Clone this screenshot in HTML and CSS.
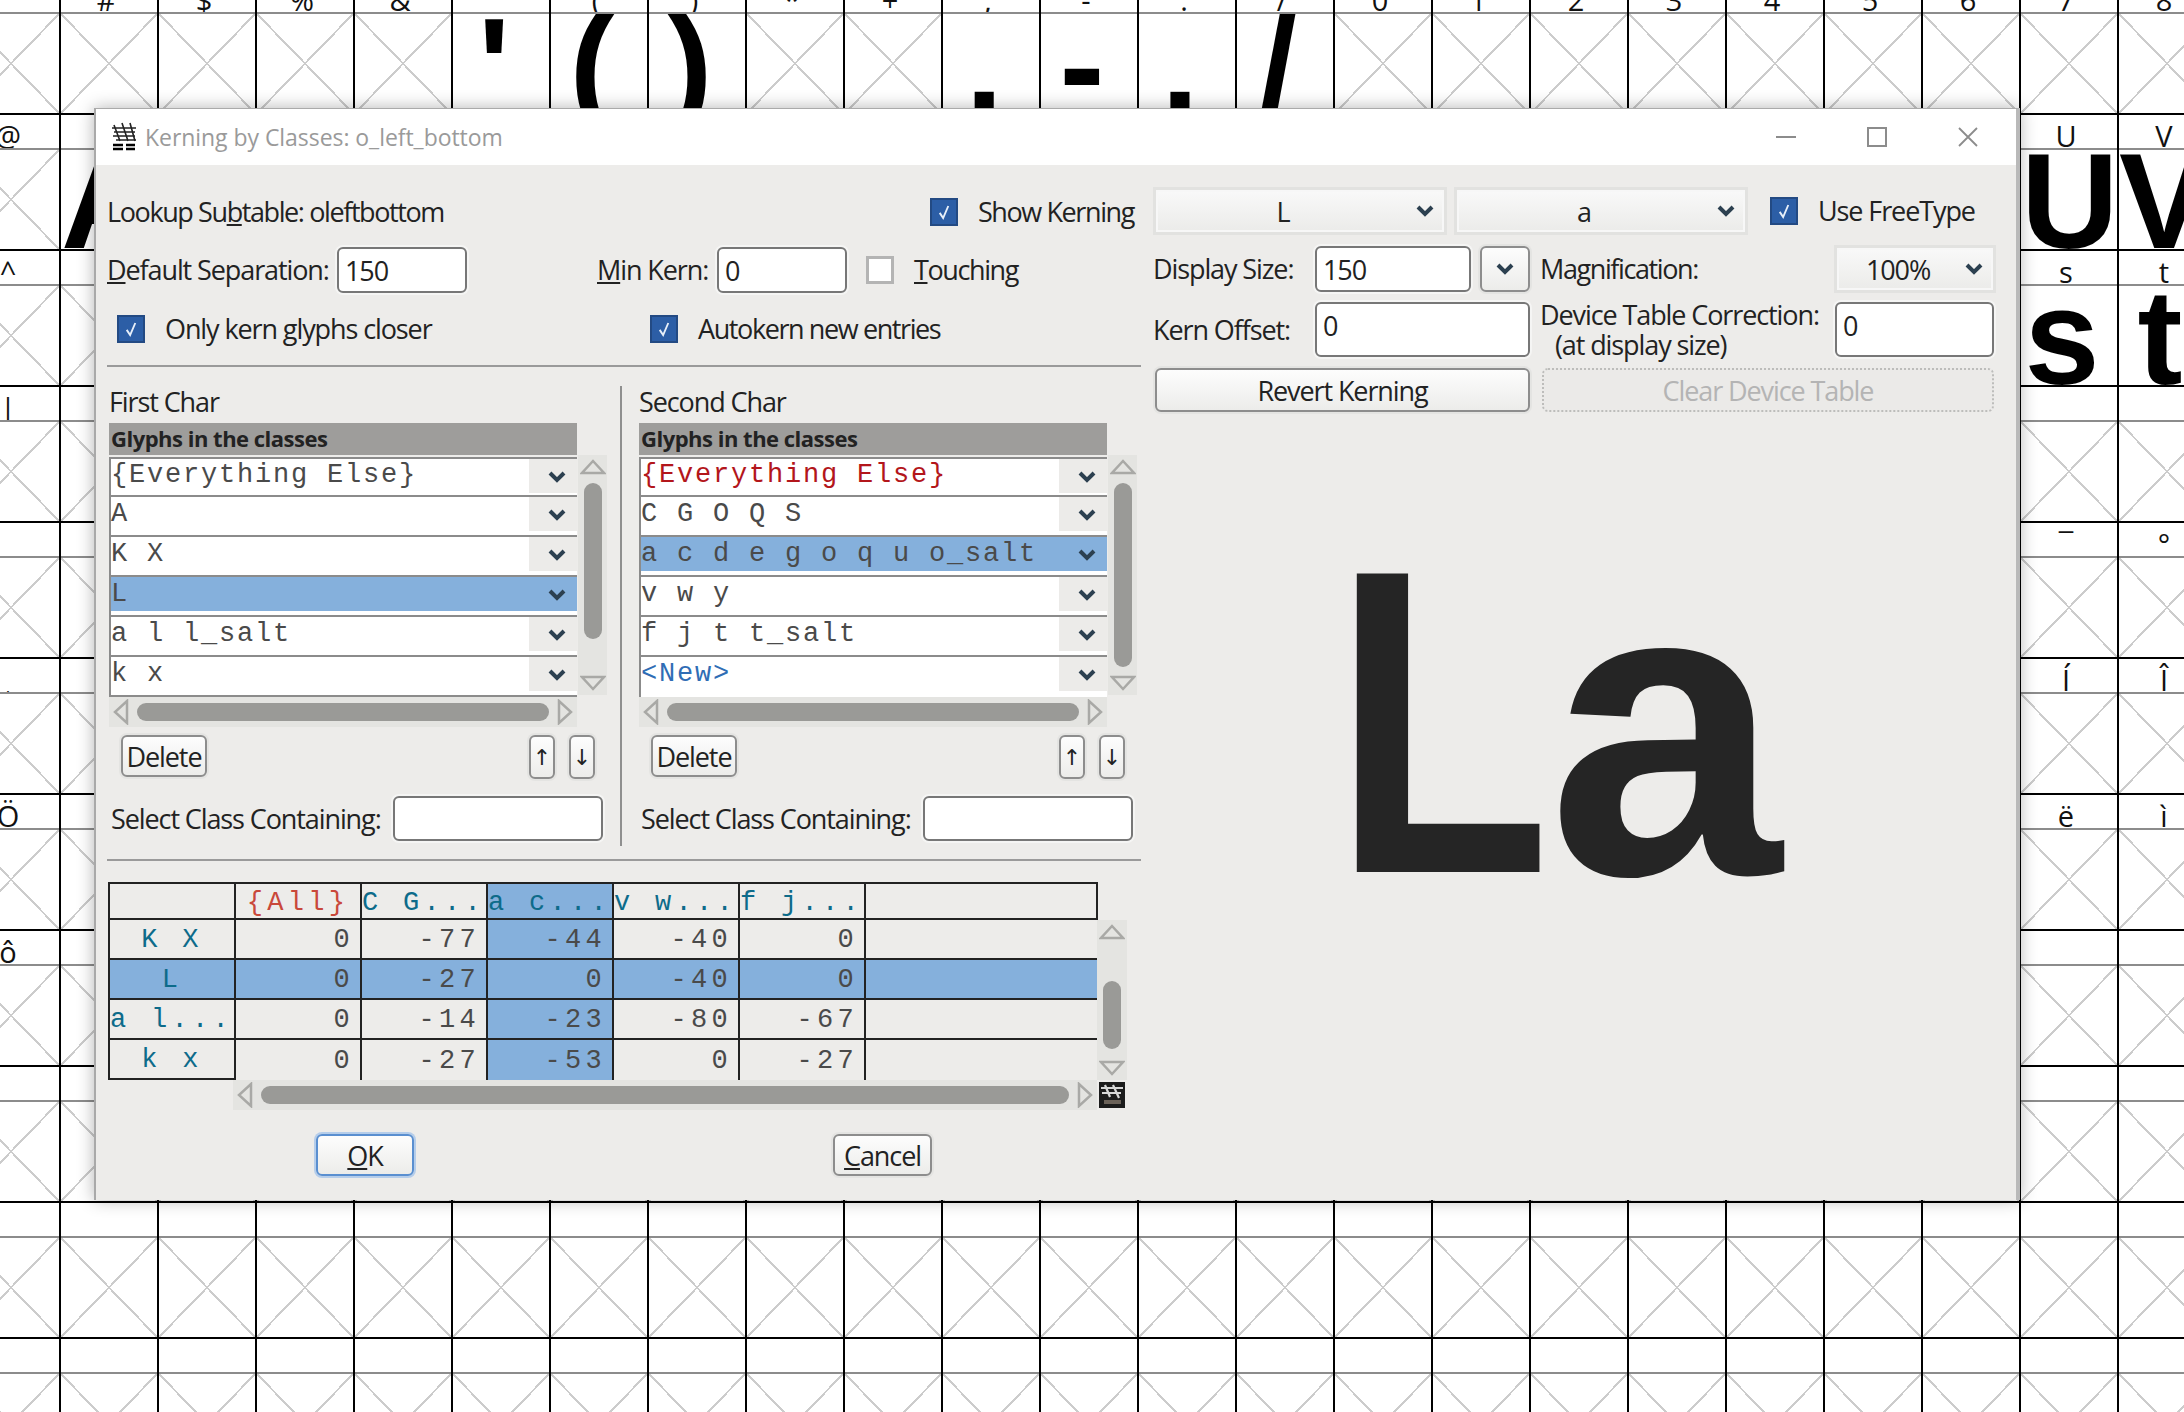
FILE: index.html
```html
<!DOCTYPE html>
<html lang="en">
<head>
    <meta charset="UTF-8">
    <meta name="viewport" content="width=device-width, initial-scale=1.0">
    <title>Kerning by Classes</title>
    <link rel="stylesheet" href="styles.css">
</head>
<body>
    <!-- shared icons -->
    <svg class="defs" width="0" height="0">
        <symbol id="chev" viewBox="0 0 18 12"><polyline points="2,2 9,9 16,2" fill="none" stroke="#2c4050" stroke-width="4"/></symbol>
        <symbol id="tri-up" viewBox="0 0 26 16"><polygon points="13,2 24,14 2,14" fill="none" stroke="#a9a9a6" stroke-width="2.5"/></symbol>
        <symbol id="tri-down" viewBox="0 0 26 16"><polygon points="2,2 24,2 13,14" fill="none" stroke="#a9a9a6" stroke-width="2.5"/></symbol>
        <symbol id="tri-left" viewBox="0 0 16 26"><polygon points="14,2 14,24 2,13" fill="none" stroke="#a9a9a6" stroke-width="2.5"/></symbol>
        <symbol id="tri-right" viewBox="0 0 16 26"><polygon points="2,2 2,24 14,13" fill="none" stroke="#a9a9a6" stroke-width="2.5"/></symbol>
        <symbol id="tick" viewBox="0 0 28 28"><polyline points="9,15 13,21 19,7" fill="none" stroke="#e8f0fa" stroke-width="2.2"/></symbol>
    </svg>

    <!-- font view behind the dialog, filled by script.js -->
    <div id="fontView" class="fontview"></div>

    <div class="dialog">
        <div class="titlebar">
            <svg class="app-icon" width="26" height="30" viewBox="0 0 26 30">
                <path d="M3 3 L9 19 M1 6 H13 M11 1 L17 19 M9 6 H25 M19 1 L24 19 M3 10 H24 M2 14 H24 M5 18 H25" stroke="#222" stroke-width="1.6" fill="none"/>
                <path d="M2 23 H24 M2 27 H24" stroke="#000" stroke-width="2.4" stroke-dasharray="10 3"/>
            </svg>
            <span class="title-text">Kerning by Classes: o_left_bottom</span>
            <div class="win-buttons">
                <svg width="20" height="20" viewBox="0 0 20 20"><path d="M0 10 H20" stroke="#8c8c8c" stroke-width="2"/></svg>
                <svg width="20" height="20" viewBox="0 0 20 20"><rect x="1" y="1" width="18" height="18" fill="none" stroke="#8c8c8c" stroke-width="2"/></svg>
                <svg width="20" height="20" viewBox="0 0 20 20"><path d="M1 1 L19 19 M19 1 L1 19" stroke="#8c8c8c" stroke-width="1.8"/></svg>
            </div>
        </div>

        <div class="dialog-body">
            <div class="pane-left">
                <div class="row row-a">
                    <span class="lbl lbl-tight">Lookup Su<u>b</u>table: oleftbottom</span>
                    <label class="check-group"><span class="check on"><svg><use href="#tick"/></svg></span><span class="lbl lbl-tight">Show Kerning</span></label>
                </div>
                <div class="row row-b">
                    <span class="lbl lbl-sep"><u>D</u>efault Separation:</span>
                    <input class="field field-130" type="text" value="150">
                    <span class="lbl lbl-min"><u>M</u>in Kern:</span>
                    <input class="field field-130" type="text" value="0">
                    <label class="check-group touching"><span class="check"></span><span class="lbl lbl-tight"><u>T</u>ouching</span></label>
                </div>
                <div class="row row-c">
                    <label class="check-group closer"><span class="check on"><svg><use href="#tick"/></svg></span><span class="lbl">Only kern glyphs closer</span></label>
                    <label class="check-group"><span class="check on"><svg><use href="#tick"/></svg></span><span class="lbl lbl-tight">Autokern new entries</span></label>
                </div>
                <div class="separator sep-top"></div>

                <div class="char-panels">
                    <div class="char-panel first">
                        <div class="panel-title lbl">First Char</div>
                        <div class="list-box">
                            <div class="list-head">Glyphs in the classes</div>
                            <div class="spacer"></div>
                            <div class="list closed">
                                <div class="list-row"><span class="cls-text">{Everything Else}</span><span class="cls-chev"><svg><use href="#chev"/></svg></span></div>
                                <div class="list-row"><span class="cls-text">A</span><span class="cls-chev"><svg><use href="#chev"/></svg></span></div>
                                <div class="list-row"><span class="cls-text">K X</span><span class="cls-chev"><svg><use href="#chev"/></svg></span></div>
                                <div class="list-row sel"><span class="cls-text">L</span><span class="cls-chev"><svg><use href="#chev"/></svg></span></div>
                                <div class="list-row"><span class="cls-text">a l l_salt</span><span class="cls-chev"><svg><use href="#chev"/></svg></span></div>
                                <div class="list-row"><span class="cls-text">k x</span><span class="cls-chev"><svg><use href="#chev"/></svg></span></div>
                            </div>
                            <div class="vscroll list-v">
                                <svg class="tri-v"><use href="#tri-up"/></svg>
                                <div class="track-v"><div class="thumb-v thumb-first"></div></div>
                                <svg class="tri-v"><use href="#tri-down"/></svg>
                            </div>
                            <div class="hscroll">
                                <svg class="tri-h"><use href="#tri-left"/></svg>
                                <div class="thumb-h"></div>
                                <svg class="tri-h"><use href="#tri-right"/></svg>
                            </div>
                        </div>
                        <div class="panel-btns">
                            <button class="btn btn-delete">Delete</button>
                            <button class="btn btn-arrow">↑</button>
                            <button class="btn btn-arrow">↓</button>
                        </div>
                        <div class="panel-select">
                            <span class="lbl">Select Class Containing:</span>
                            <input class="field field-select" type="text">
                        </div>
                    </div>

                    <div class="char-panel second">
                        <div class="panel-title lbl">Second Char</div>
                        <div class="list-box">
                            <div class="list-head">Glyphs in the classes</div>
                            <div class="spacer"></div>
                            <div class="list">
                                <div class="list-row"><span class="cls-text red">{Everything Else}</span><span class="cls-chev"><svg><use href="#chev"/></svg></span></div>
                                <div class="list-row"><span class="cls-text">C G O Q S</span><span class="cls-chev"><svg><use href="#chev"/></svg></span></div>
                                <div class="list-row sel"><span class="cls-text">a c d e g o q u o_salt</span><span class="cls-chev"><svg><use href="#chev"/></svg></span></div>
                                <div class="list-row"><span class="cls-text">v w y</span><span class="cls-chev"><svg><use href="#chev"/></svg></span></div>
                                <div class="list-row"><span class="cls-text">f j t t_salt</span><span class="cls-chev"><svg><use href="#chev"/></svg></span></div>
                                <div class="list-row"><span class="cls-text blue">&lt;New&gt;</span><span class="cls-chev"><svg><use href="#chev"/></svg></span></div>
                            </div>
                            <div class="vscroll list-v">
                                <svg class="tri-v"><use href="#tri-up"/></svg>
                                <div class="track-v"><div class="thumb-v thumb-second"></div></div>
                                <svg class="tri-v"><use href="#tri-down"/></svg>
                            </div>
                            <div class="hscroll">
                                <svg class="tri-h"><use href="#tri-left"/></svg>
                                <div class="thumb-h"></div>
                                <svg class="tri-h"><use href="#tri-right"/></svg>
                            </div>
                        </div>
                        <div class="panel-btns">
                            <button class="btn btn-delete">Delete</button>
                            <button class="btn btn-arrow">↑</button>
                            <button class="btn btn-arrow">↓</button>
                        </div>
                        <div class="panel-select">
                            <span class="lbl">Select Class Containing:</span>
                            <input class="field field-select" type="text">
                        </div>
                    </div>
                </div>
                <div class="separator sep-bottom"></div>

                <div class="kern-area">
                    <table class="kern-table">
                        <colgroup><col class="c-first"><col class="c-num"><col class="c-num"><col class="c-num"><col class="c-num"><col class="c-num"><col class="c-rest"></colgroup>
                        <tr class="head"><th></th><th class="all">{All}</th><th class="left">C G...</th><th class="left sel">a c...</th><th class="left">v w...</th><th class="left">f j...</th><th class="last"></th></tr>
                        <tr><th>K X</th><td>0</td><td>-77</td><td class="sel">-44</td><td>-40</td><td>0</td><td class="last"></td></tr>
                        <tr class="sel"><th>L</th><td>0</td><td>-27</td><td>0</td><td>-40</td><td>0</td><td class="last"></td></tr>
                        <tr><th class="left">a l...</th><td>0</td><td>-14</td><td class="sel">-23</td><td>-80</td><td>-67</td><td class="last"></td></tr>
                        <tr class="end"><th>k x</th><td>0</td><td>-27</td><td class="sel">-53</td><td>0</td><td>-27</td><td class="last"></td></tr>
                    </table>
                    <div class="vscroll kern-v">
                        <svg class="tri-v"><use href="#tri-up"/></svg>
                        <div class="track-v"><div class="thumb-v thumb-kern"></div></div>
                        <svg class="tri-v"><use href="#tri-down"/></svg>
                    </div>
                    <div class="hscroll kern-h">
                        <svg class="tri-h"><use href="#tri-left"/></svg>
                        <div class="thumb-h"></div>
                        <svg class="tri-h"><use href="#tri-right"/></svg>
                    </div>
                    <svg class="corner-logo" width="26" height="26" viewBox="0 0 26 26">
                        <rect width="26" height="26" fill="#1c1c1c"/>
                        <path d="M6 3 L11 15 M2 6 H14 M14 3 L20 16 M11 6 H24 M3 11 H22" stroke="#d8d8d8" stroke-width="2.2" fill="none"/>
                        <path d="M5 20 H22" stroke="#6b6259" stroke-width="4"/>
                    </svg>
                </div>

                <div class="dialog-actions">
                    <button class="btn btn-ok"><u>O</u>K</button>
                    <button class="btn btn-cancel"><u>C</u>ancel</button>
                </div>
            </div>

            <div class="pane-right">
                <div class="r-row r-row-1">
                    <div class="combo combo-glyph"><span class="combo-text">L</span><svg><use href="#chev"/></svg></div>
                    <div class="combo combo-glyph"><span class="combo-text">a</span><svg><use href="#chev"/></svg></div>
                    <label class="check-group freetype"><span class="check on"><svg><use href="#tick"/></svg></span><span class="lbl">Use FreeType</span></label>
                </div>
                <div class="r-row r-row-2">
                    <span class="lbl r-lbl">Display Size:</span>
                    <input class="field field-size" type="text" value="150">
                    <button class="btn btn-spin"><svg><use href="#chev"/></svg></button>
                    <span class="lbl lbl-tight r-mag">Magnification:</span>
                    <div class="combo combo-mag"><span class="combo-text">100%</span><svg><use href="#chev"/></svg></div>
                </div>
                <div class="r-row r-row-3">
                    <span class="lbl r-lbl">Kern Offset:</span>
                    <div class="field tall-field field-offset">0</div>
                    <span class="lbl r-device">Device Table Correction:<br><span class="indent">(at display size)</span></span>
                    <div class="field tall-field field-device">0</div>
                </div>
                <div class="r-row r-row-4">
                    <button class="btn btn-revert">Revert Kerning</button>
                    <button class="btn btn-clear" disabled>Clear Device Table</button>
                </div>
                <div class="preview"><span class="pv-l">L</span><span class="pv-a">a</span></div>
            </div>
        </div>
    </div>

    <script src="script.js"></script>
</body>
</html>
```
FILE: styles.css
```css
/* Page and font view */
* {
    box-sizing: border-box;
}

body {
    margin: 0;
    height: 1412px;
    overflow: hidden;
    position: relative;
    background-color: #fff;
    font-family: "Open Sans", sans-serif;
    color: #222;
}

.defs {
    position: absolute;
}

.fontview {
    display: grid;
    grid-template-columns: repeat(23, 98px);
    grid-auto-rows: 136px;
    margin: -23px 0 0 -39px;
}

.cell {
    border-top: 2px solid #000;
    border-left: 2px solid #000;
    overflow: hidden;
}

.cell-label {
    height: 35px;
    border-bottom: 2px solid #8c8c8c;
    text-align: center;
    font-size: 29px;
    line-height: 41px;
    color: #111;
    overflow: hidden;
    padding-right: 6px;
}

.cell-glyph {
    height: 99px;
    font-family: "Liberation Sans", sans-serif;
    font-weight: bold;
    font-size: 135px;
    line-height: 104px;
    text-align: center;
    color: #000;
    overflow: hidden;
    padding-right: 14px;
    white-space: nowrap;
}

.cell-glyph.empty {
    background-image:
        linear-gradient(to top right, transparent calc(50% - 1px), #ccc calc(50% - 1px), #ccc calc(50% + 1px), transparent calc(50% + 1px)),
        linear-gradient(to bottom right, transparent calc(50% - 1px), #ccc calc(50% - 1px), #ccc calc(50% + 1px), transparent calc(50% + 1px));
}

/* Dialog window */
.dialog {
    position: absolute;
    left: 94px;
    top: 108px;
    width: 1926px;
    height: 1092px;
    background-color: #edecea;
    border-top: 1px solid #aaa;
    border-left: 2px solid #a9a9a9;
    border-right: 4px solid #b9b9b9;
    box-shadow: 0 0 16px rgba(0, 0, 0, 0.3);
}

.titlebar {
    height: 56px;
    background-color: #fff;
    display: flex;
    align-items: center;
    padding-left: 15px;
}

.app-icon {
    margin-right: 8px;
}

.title-text {
    font-size: 23px;
    color: #9a9a9a;
    letter-spacing: -0.05px;
}

.win-buttons {
    margin-left: auto;
    display: flex;
    gap: 71px;
    padding-right: 38px;
}

.dialog-body {
    display: flex;
}

.lbl {
    font-size: 27px;
    letter-spacing: -1.1px;
    line-height: 32px;
    white-space: nowrap;
}

.lbl-tight {
    letter-spacing: -1.4px;
}

.pane-left {
    width: 1057px;
    padding-left: 11px;
}

.row {
    display: flex;
    align-items: center;
}

.row-a {
    height: 48px;
    margin-top: 23px;
    justify-content: space-between;
    padding-right: 19px;
}

.row-b {
    height: 46px;
    margin-top: 11px;
    margin-right: 12px;
}

.row-c {
    height: 46px;
    margin-top: 13px;
    padding-left: 10px;
}

.lbl-sep {
    width: 230px;
}

.lbl-min {
    width: 120px;
    margin-left: 130px;
}

.field {
    height: 46px;
    border: 2px solid #777;
    border-radius: 6px;
    background-color: #fff;
    box-shadow: 0 0 0 2px #f5f5f4;
    font-family: "Open Sans", sans-serif;
    font-size: 27px;
    letter-spacing: -1.1px;
    color: #222;
    padding: 0 6px;
    outline: none;
}

.field-130 {
    width: 130px;
}

.check-group {
    display: flex;
    align-items: center;
    gap: 20px;
}

.check {
    width: 28px;
    height: 28px;
    background-color: #fff;
    border: 3px solid #b4b4b4;
    flex: none;
}

.check.on {
    background-color: #2c5ea6;
    border: 2px solid #234a83;
}

.check svg {
    display: block;
    width: 24px;
    height: 24px;
}

.touching {
    margin-left: 19px;
}

.closer {
    width: 533px;
}

.separator {
    height: 2px;
    background-color: #9a9a9a;
    width: 1034px;
}

.sep-top {
    margin-top: 13px;
}

.sep-bottom {
    margin-top: 13px;
}

/* Class lists */
.char-panels {
    display: flex;
    margin-top: 19px;
}

.char-panel {
    height: 460px;
}

.char-panel.first {
    width: 515px;
    padding-left: 2px;
    border-right: 2px solid #8f8f8f;
}

.char-panel.second {
    width: 515px;
    padding-left: 17px;
}

.panel-title {
    height: 37px;
}

.list-box {
    display: grid;
    grid-template-columns: 468px 30px;
    grid-template-rows: 32px 242px 30px;
}

.list-head {
    background-color: #9e9d9b;
    font-size: 22px;
    font-weight: bold;
    letter-spacing: -0.5px;
    line-height: 30px;
    padding-left: 2px;
    white-space: nowrap;
}

.list {
    margin-top: 2px;
    height: 240px;
    border-left: 2px solid #8b8b8b;
    background-color: #fff;
}

.list.closed {
    height: 240px;
    border-bottom: 2px solid #8b8b8b;
}

.list-row {
    height: 40px;
    display: flex;
    align-items: flex-start;
    background-color: #fff;
    border-top: 2px solid #8b8b8b;
}

.list-row:first-child {
    height: 38px;
}

.cls-text,
.cls-chev {
    height: 34px;
    background-color: #fff;
}

.cls-text {
    flex: 1;
    font-family: "Liberation Mono", monospace;
    font-size: 27px;
    letter-spacing: 1.8px;
    line-height: 34px;
    white-space: pre;
    color: #4a4a4a;
    overflow: visible;
}

.list-row:first-child .cls-text {
    line-height: 32px;
}

.cls-text.red {
    color: #b3161b;
}

.cls-text.blue {
    color: #2f6db5;
}

.cls-chev {
    width: 48px;
    background-color: #ecebe9;
    display: flex;
    align-items: center;
    justify-content: center;
    padding: 2px 0 0 7px;
}

.cls-chev svg,
.combo svg,
.btn-spin svg {
    width: 18px;
    height: 12px;
    flex: none;
}

.list-row.sel .cls-text,
.list-row.sel .cls-chev {
    background-color: #85b0dc;
}

/* Scrollbars */
.vscroll {
    background-color: #e4e4e1;
    display: flex;
    flex-direction: column;
    align-items: center;
    padding: 4px 0;
}

.list-v {
    height: 240px;
    margin-left: 1px;
    width: 29px;
}

.tri-v {
    width: 26px;
    height: 16px;
    flex: none;
}

.track-v {
    flex: 1;
    width: 18px;
    position: relative;
}

.thumb-v {
    position: absolute;
    left: 0;
    width: 18px;
    border-radius: 9px;
    background-color: #9a9a97;
}

.thumb-first {
    top: 8px;
    height: 156px;
}

.thumb-second {
    top: 8px;
    height: 184px;
}

.thumb-kern {
    top: 41px;
    height: 68px;
}

.hscroll {
    grid-column: 1;
    height: 30px;
    background-color: #e4e4e1;
    display: flex;
    align-items: center;
    padding: 0 4px;
    gap: 8px;
}

.tri-h {
    width: 16px;
    height: 26px;
    flex: none;
}

.thumb-h {
    flex: 1;
    height: 18px;
    border-radius: 9px;
    background-color: #9a9a97;
}

/* Buttons */
.btn {
    font-family: "Open Sans", sans-serif;
    font-size: 27px;
    letter-spacing: -1.1px;
    color: #222;
    background: linear-gradient(#fdfdfd, #ececea);
    border: 2px solid #8d8d8d;
    border-radius: 6px;
    box-shadow: 0 0 0 2px #e4e4e2;
    padding: 0;
}

.panel-btns {
    display: flex;
    align-items: flex-start;
    gap: 14px;
    margin-top: 8px;
    padding: 0 12px;
    width: 498px;
    height: 44px;
}

.btn-delete {
    width: 86px;
    height: 42px;
    margin-right: auto;
}

.btn-arrow {
    width: 26px;
    height: 44px;
    font-family: "DejaVu Sans", sans-serif;
    font-size: 22px;
    letter-spacing: 0;
}

.panel-select {
    display: flex;
    align-items: center;
    justify-content: space-between;
    margin-top: 17px;
    padding: 0 4px 0 2px;
    width: 498px;
    height: 45px;
}

.field-select {
    width: 210px;
    height: 45px;
}

/* Kerning table */
.kern-area {
    display: grid;
    grid-template-columns: 989px 30px;
    grid-template-rows: 38px 160px 30px;
    margin: 21px 0 0 1px;
}

.kern-table {
    grid-column: 1;
    grid-row: 1 / span 2;
    width: 990px;
    height: 198px;
    table-layout: fixed;
    border-collapse: separate;
    border-spacing: 0;
    font-family: "Liberation Mono", monospace;
    font-size: 27px;
    letter-spacing: 4.3px;
    color: #4a4a4a;
}

.c-first { width: 128px; }
.c-num { width: 126px; }
.c-rest { width: 232px; }

.kern-table th,
.kern-table td {
    border-right: 2px solid #222;
    border-bottom: 2px solid #222;
    padding: 2px 0 0;
    height: 40px;
    font-weight: normal;
    white-space: pre;
    overflow: hidden;
}

.kern-table tr.head th {
    border-top: 2px solid #222;
    height: 38px;
    padding-top: 3px;
}

.kern-table th {
    color: #0d6b8a;
    text-align: center;
}

.kern-table th.left {
    text-align: left;
}

.kern-table th.all {
    color: #c9483a;
}

.kern-table tr > th:first-child {
    border-left: 2px solid #222;
}

.kern-table td {
    text-align: right;
    padding-right: 6px;
}

.kern-table td.last {
    border-right: none;
}

.kern-table .sel,
.kern-table tr.sel th,
.kern-table tr.sel td {
    background-color: #85b0dc;
}

.kern-table tr.end td {
    border-bottom: none;
}

.kern-v {
    grid-column: 2;
    grid-row: 2;
    position: relative;
}

.kern-h {
    grid-column: 1;
    grid-row: 3;
    margin-left: 125px;
}

.corner-logo {
    grid-column: 2;
    grid-row: 3;
    margin: 2px 0 0 2px;
}

.dialog-actions {
    display: flex;
    margin: 24px 0 0 209px;
    gap: 419px;
}

.btn-ok {
    width: 98px;
    height: 42px;
    border-color: #5a8fd0;
    box-shadow: 0 0 0 2px #b5cdea;
}

.btn-cancel {
    width: 99px;
    height: 42px;
}

/* Right side */
.pane-right {
    width: 843px;
}

.r-row {
    display: flex;
    align-items: center;
}

.r-row-1 {
    height: 48px;
    margin-top: 22px;
    gap: 7px;
}

.r-row-2 {
    height: 46px;
    margin-top: 11px;
}

.r-row-3 {
    height: 55px;
    margin-top: 10px;
}

.r-row-4 {
    height: 44px;
    margin-top: 11px;
    padding-left: 2px;
    gap: 12px;
}

.combo {
    height: 48px;
    border: 3px solid #e2e2e0;
    background: linear-gradient(#f9f9f9, #ebebe9);
    box-shadow: inset 0 0 0 2px #f7f7f7;
    display: flex;
    align-items: center;
    padding-right: 10px;
}

.combo-text {
    flex: 1;
    text-align: center;
    font-size: 27px;
    letter-spacing: -1.1px;
    padding-right: 6px;
}

.combo-glyph {
    width: 294px;
}

.combo-mag {
    width: 162px;
}

.freetype {
    margin-left: 15px;
}

.r-lbl {
    width: 162px;
}

.field-size {
    width: 156px;
}

.btn-spin {
    width: 50px;
    height: 46px;
    margin: 0 10px 0 9px;
    display: flex;
    align-items: center;
    justify-content: center;
}

.r-mag {
    width: 294px;
}

.tall-field {
    height: 55px;
    line-height: 44px;
}

.field-offset {
    width: 215px;
    margin-right: 10px;
}

.r-device {
    width: 295px;
    line-height: 30px;
}

.indent {
    margin-left: 15px;
}

.field-device {
    width: 159px;
}

.btn-revert {
    width: 375px;
    height: 44px;
}

.btn-clear {
    width: 452px;
    height: 44px;
    color: #b4b4b4;
    background: #ebeae8;
    border: 2px dotted #bdbdbb;
    box-shadow: none;
}

/* Glyph preview */
.preview {
    display: flex;
    align-items: baseline;
    margin: 90px 0 0 180px;
    font-family: "Liberation Sans", sans-serif;
    font-weight: bold;
    color: #252525;
}

.pv-l {
    font-size: 434px;
    line-height: 439px;
    transform: scaleX(0.82);
    transform-origin: left bottom;
    width: 215px;
}

.pv-a {
    font-size: 420px;
    line-height: 439px;
    transform: translateY(2px);
}
```
FILE: script.js
```js
// Fill the font view: 30 encoding slots per row, starting at the double quote
const fontView = document.getElementById("fontView");
const drawn = /[A-Za-z'(),\-./]/;

for (let row = 0; row < 11; row++) {
    for (let col = 0; col < 23; col++) {
        const code = 0x22 + row * 30 + col;
        const printable = code < 0x7f || (code > 0xa0 && code <= 0xff && code !== 0xad);
        const ch = printable ? String.fromCharCode(code) : "";

        // the dialog covers these slots, so they stay empty
        const underDialog = row >= 1 && row <= 8 && col <= 20;

        const cell = document.createElement("div");
        cell.className = "cell";

        const label = document.createElement("div");
        label.className = "cell-label";
        label.textContent = underDialog && col >= 1 ? "" : ch;

        const glyph = document.createElement("div");
        if (code < 0x7f && drawn.test(ch) && (!underDialog || col === 1)) {
            glyph.className = "cell-glyph";
            glyph.textContent = ch;
        } else {
            glyph.className = "cell-glyph empty";
        }

        cell.appendChild(label);
        cell.appendChild(glyph);
        fontView.appendChild(cell);
    }
}
```
